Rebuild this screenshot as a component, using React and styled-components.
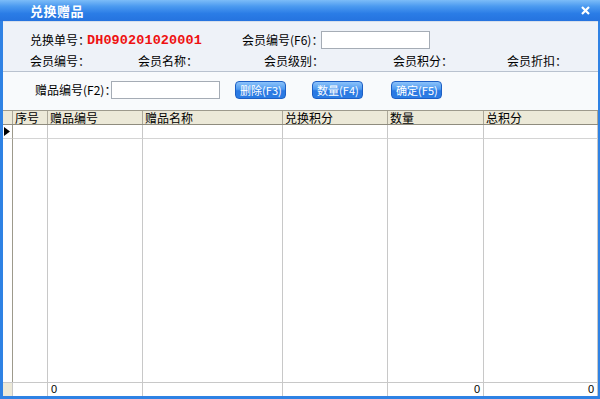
import React from 'react';
import styled, { createGlobalStyle } from 'styled-components';

const GlobalStyle = createGlobalStyle`
  html, body {
    margin: 0;
    padding: 0;
    background: #ffffff;
  }
  body {
    font-family: 'Noto Sans CJK SC', 'DejaVu Sans', sans-serif;
    font-size: 12px;
    color: #000;
  }
`

const Window = styled.div`
  width: 600px;
  height: 399px;
  box-sizing: border-box;
  display: flex;
  flex-direction: column;
  background: #2f82e4;
  padding: 0 2px 3px 3px;
  overflow: hidden;
`

const TitleBar = styled.div`
  height: 21px;
  margin: 0 -2px 0 -3px;
  display: flex;
  align-items: center;
  justify-content: space-between;
  padding: 0 10px 0 30px;
  background: linear-gradient(#7cbcf8 0%, #4b9af0 30%, #2a7ce6 65%, #2573df 100%);
  color: #fff;
  font-weight: bold;
  font-size: 13px;
  letter-spacing: 0.5px;
`

const Close = styled.svg`
  width: 9px;
  height: 9px;
`

const InfoPanel = styled.div`
  height: 51px;
  box-sizing: border-box;
  background: #eef2f8;
  border-top: 1px solid #d7dfea;
  border-bottom: 1px solid #b9c2cf;
  padding: 9px 0 0 27px;
  display: flex;
  flex-direction: column;
  gap: 3px;
`

const InfoRow = styled.div`
  display: grid;
  grid-template-columns: ${props => props.cols};
  align-items: center;
  height: ${props => props.h || 18}px;
`

const Label = styled.span`
  white-space: nowrap;
  line-height: 18px;
`

const OrderNo = styled.span`
  margin-left: -3px;
  font-family: 'Liberation Mono', monospace;
  font-weight: bold;
  font-size: 13.5px;
  color: #ee1111;
  letter-spacing: 0.1px;
`

const Field = styled.div`
  display: flex;
  align-items: center;
`

const Input = styled.div`
  width: ${props => props.w}px;
  height: 18px;
  margin-left: ${props => props.ml || 0}px;
  box-sizing: border-box;
  background: #fff;
  border: 1px solid #a5acb5;
`

const ToolRow = styled.div`
  height: 38px;
  box-sizing: border-box;
  background: #f8fafc;
  display: flex;
  align-items: center;
  padding: 0 0 2px 32px;
`

const Btn = styled.div`
  width: 51px;
  height: 18px;
  box-sizing: border-box;
  margin-left: ${props => props.ml}px;
  border: 1px solid #1d5fc4;
  border-radius: 4px;
  background: linear-gradient(#8cc2fa 0%, #4f9bf0 45%, #2a78e2 55%, #2b7ce4 100%);
  color: #fff;
  font-size: 11px;
  display: flex;
  align-items: center;
  justify-content: center;
  white-space: nowrap;
`

const Grid = styled.div`
  flex: 1;
  display: flex;
  flex-direction: column;
  background: #fff;
  border-top: 1px solid #9d9a8c;
`

const cols = '10px 35px 95px 140px 105px 96px 1fr'

const Header = styled.div`
  display: grid;
  grid-template-columns: ${cols};
  height: 13px;
  background: #ece9d8;
  border-bottom: 1px solid #8f8c7e;
`

const HeadCell = styled.div`
  border-right: 1px solid #aca899;
  padding-left: 2px;
  height: 13px;
  line-height: 13px;
  font-size: 12px;
  white-space: nowrap;
`

const Body = styled.div`
  flex: 1;
  display: grid;
  grid-template-columns: ${cols};
  grid-template-rows: 14px 1fr;
`

const Cell = styled.div`
  border-right: 1px solid ${props => props.ind ? '#9d9a8c' : '#c8c8c8'};
  border-bottom: ${props => props.first ? '1px solid #d4d4d4' : 'none'};
  display: flex;
  align-items: center;
  padding-left: 1px;
`

const Footer = styled.div`
  display: grid;
  grid-template-columns: ${cols};
  height: 13px;
  border-top: 1px solid #c8c8c8;
`

const FootCell = styled.div`
  border-right: 1px solid #c8c8c8;
  background: ${props => props.ind ? '#ece9d8' : '#fff'};
  text-align: ${props => props.right ? 'right' : 'left'};
  padding: 0 3px;
  font-family: 'Liberation Sans', sans-serif;
  font-size: 11px;
  line-height: 13px;
`

const Arrow = styled.svg`
  width: 6px;
  height: 9px;
`

const columns = ['', '序号', '赠品编号', '赠品名称', '兑换积分', '数量', '总积分']

const App = () => {
  return (
    <>
      <GlobalStyle />
      <Window>
        <TitleBar>
          <span>兑换赠品</span>
          <Close viewBox="0 0 9 9">
            <path d="M1 1 L8 8 M8 1 L1 8" stroke="#fff" strokeWidth="2.2" />
          </Close>
        </TitleBar>

        <InfoPanel>
          <InfoRow cols="212px 1fr">
            <Field>
              <Label>兑换单号：</Label>
              <OrderNo>DH090201020001</OrderNo>
            </Field>
            <Field>
              <Label>会员编号(F6)：</Label>
              <Input w={109} ml={-2} />
            </Field>
          </InfoRow>
          <InfoRow cols="108px 126px 129px 114px 1fr" h={16}>
            <Label>会员编号：</Label>
            <Label>会员名称：</Label>
            <Label>会员级别：</Label>
            <Label>会员积分：</Label>
            <Label>会员折扣：</Label>
          </InfoRow>
        </InfoPanel>

        <ToolRow>
          <Field>
            <Label>赠品编号(F2)：</Label>
            <Input w={109} ml={-5} />
          </Field>
          <Btn ml={15}>删除(F3)</Btn>
          <Btn ml={26}>数量(F4)</Btn>
          <Btn ml={28}>确定(F5)</Btn>
        </ToolRow>

        <Grid>
          <Header>
            {columns.map((c, i) => <HeadCell key={i}>{c}</HeadCell>)}
          </Header>
          <Body>
            {columns.map((c, i) => (
              <Cell key={'a' + i} first ind={i === 0}>
                {i === 0 && (
                  <Arrow viewBox="0 0 6 9">
                    <path d="M0 0 L6 4.5 L0 9 Z" fill="#000" />
                  </Arrow>
                )}
              </Cell>
            ))}
            {columns.map((c, i) => <Cell key={'b' + i} ind={i === 0} />)}
          </Body>
          <Footer>
            <FootCell ind />
            <FootCell />
            <FootCell>0</FootCell>
            <FootCell />
            <FootCell />
            <FootCell right>0</FootCell>
            <FootCell right>0</FootCell>
          </Footer>
        </Grid>
      </Window>
    </>
  );
}

export default App;
